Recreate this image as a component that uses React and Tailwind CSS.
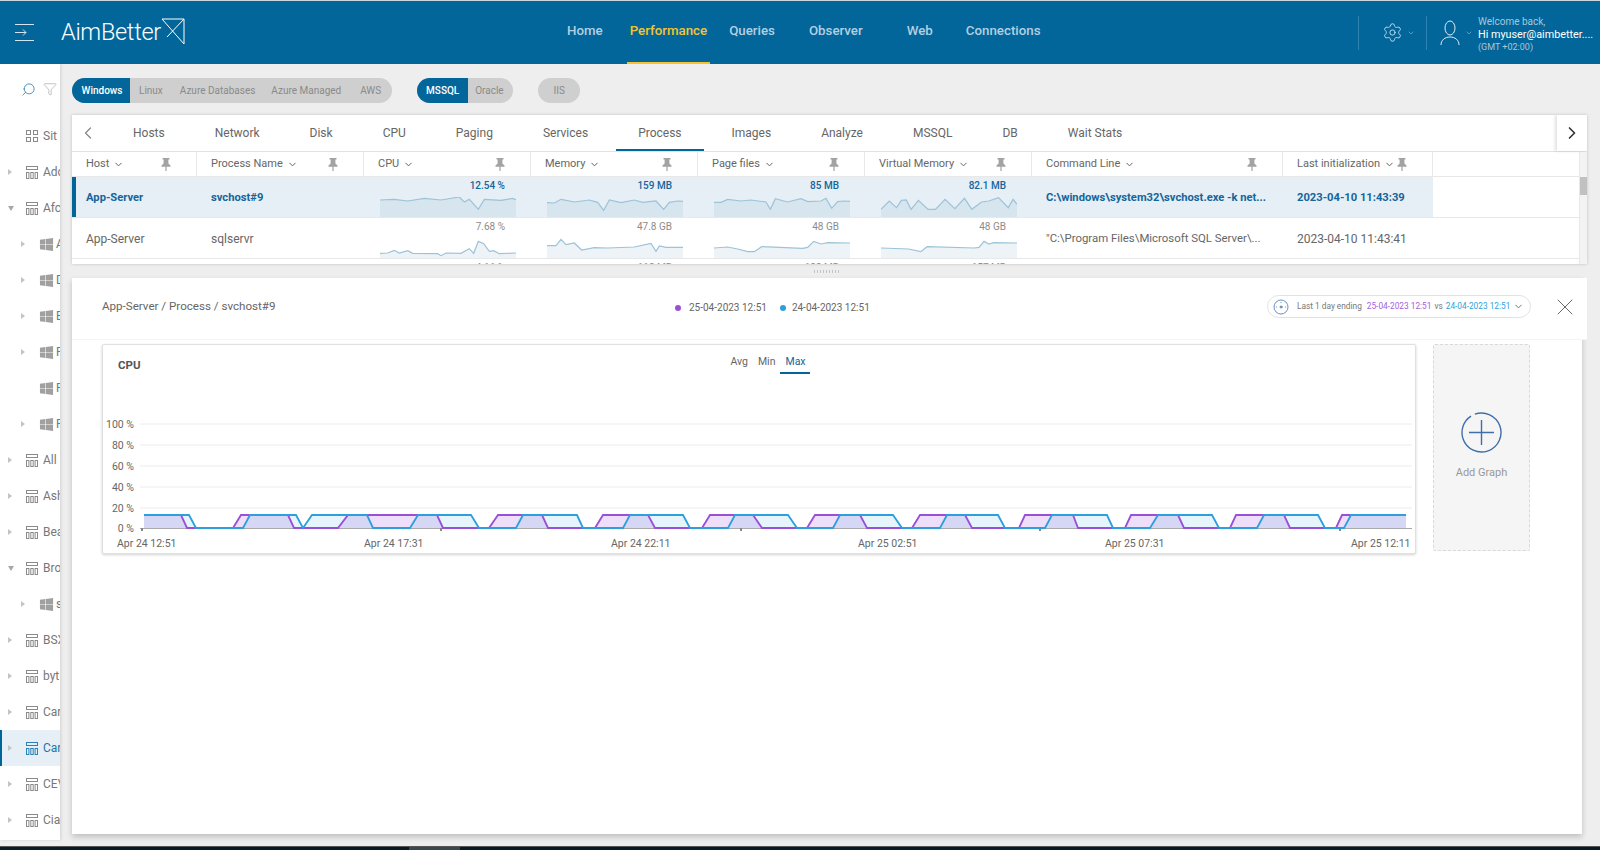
import React from 'react';
import { ChevronDown, ChevronLeft, ChevronRight, Search, Filter, Settings, X } from 'lucide-react';
import { FaWindows } from 'react-icons/fa';

const navItems = [
  { label: 'Home', cls: 'ml-0' },
  { label: 'Performance', cls: 'ml-[27px]', active: true },
  { label: 'Queries', cls: 'ml-[22px]' },
  { label: 'Observer', cls: 'ml-[34px]' },
  { label: 'Web', cls: 'ml-[44px]' },
  { label: 'Connections', cls: 'ml-[33px]' },
];

const tabs = ['Hosts', 'Network', 'Disk', 'CPU', 'Paging', 'Services', 'Process', 'Images', 'Analyze', 'MSSQL', 'DB', 'Wait Stats'];

const tree = [
  { name: 'Sit', kind: 'grid' },
  { name: 'Adc', kind: 'srv', caret: 'r' },
  { name: 'Afc', kind: 'srv', caret: 'd' },
  { name: 'A', kind: 'win', caret: 'r' },
  { name: 'D', kind: 'win', caret: 'r' },
  { name: 'E', kind: 'win', caret: 'r' },
  { name: 'F', kind: 'win', caret: 'r' },
  { name: 'F', kind: 'win' },
  { name: 'F', kind: 'win', caret: 'r' },
  { name: 'All', kind: 'srv', caret: 'r' },
  { name: 'Ash', kind: 'srv', caret: 'r' },
  { name: 'Bea', kind: 'srv', caret: 'r' },
  { name: 'Bro', kind: 'srv', caret: 'd' },
  { name: 's', kind: 'win', caret: 'r' },
  { name: 'BSX', kind: 'srv', caret: 'r' },
  { name: 'byt', kind: 'srv', caret: 'r' },
  { name: 'Car', kind: 'srv', caret: 'r' },
  { name: 'Car', kind: 'srv', caret: 'r', selected: true },
  { name: 'CEV', kind: 'srv', caret: 'r' },
  { name: 'Cia', kind: 'srv', caret: 'r' },
];

const columns = [
  { label: 'Host', w: 'w-[125px]' },
  { label: 'Process Name', w: 'w-[167px]' },
  { label: 'CPU', w: 'w-[167px]' },
  { label: 'Memory', w: 'w-[167px]' },
  { label: 'Page files', w: 'w-[167px]' },
  { label: 'Virtual Memory', w: 'w-[167px]' },
  { label: 'Command Line', w: 'w-[251px]' },
  { label: 'Last initialization', w: 'w-[150px]' },
];

// sparkline points, measured off the 3x crops
const rows = [
  {
    host: 'App-Server',
    name: 'svchost#9',
    selected: true,
    cmd: 'C:\\windows\\system32\\svchost.exe -k net...',
    time: '2023-04-10 11:43:39',
    metrics: [
      { value: '12.54 %', pts: [[0,9],[43,7],[83,12],[133,4],[183,9],[238,0],[253,15],[268,7],[295,37],[313,7],[363,10],[398,4],[408,8]] },
      { value: '159 MB', pts: [[0,17],[22,18],[42,7],[82,15],[127,9],[152,16],[170,40],[187,9],[222,17],[262,9],[287,16],[327,12],[350,37],[367,16],[392,12],[408,13]] },
      { value: '85 MB', pts: [[0,16],[21,16],[41,7],[81,12],[111,9],[156,15],[169,37],[184,5],[221,15],[261,5],[281,14],[321,12],[336,4],[353,34],[371,14],[390,12],[408,13]] },
      { value: '82.1 MB', w: 280, pts: [[0,37],[17,12],[32,32],[42,10],[52,9],[62,37],[77,10],[97,37],[112,37],[132,7],[152,35],[172,4],[187,37],[207,15],[222,12],[242,2],[262,32],[272,7],[280,22]] },
    ],
  },
  {
    host: 'App-Server',
    name: 'sqlservr',
    cmd: '"C:\\Program Files\\Microsoft SQL Server\\...',
    time: '2023-04-10 11:43:41',
    metrics: [
      { value: '7.68 %', pts: [[0,46],[23,45],[43,37],[58,45],[83,38],[98,46],[173,47],[183,53],[198,45],[243,46],[268,32],[281,46],[295,10],[311,17],[328,40],[341,38],[358,47],[408,45]] },
      { value: '47.8 GB', pts: [[0,23],[27,23],[42,4],[57,20],[82,15],[104,36],[142,29],[182,30],[262,27],[312,16],[327,40],[337,24],[357,28],[408,28]] },
      { value: '48 GB', pts: [[0,30],[41,27],[71,33],[101,41],[121,41],[143,26],[266,31],[281,28],[299,10],[321,18],[341,14],[408,15]] },
      { value: '48 GB', w: 280, pts: [[0,30],[57,33],[82,41],[95,26],[192,30],[202,28],[212,10],[222,18],[232,14],[280,15]] },
    ],
  },
  {
    host: 'App-Server',
    name: 'w3wp',
    cmd: '',
    time: '',
    metrics: [
      { value: '4.16 %', pts: [[0,30],[408,30]] },
      { value: '112 MB', pts: [[0,30],[408,30]] },
      { value: '123 MB', pts: [[0,30],[408,30]] },
      { value: '157 MB', w: 280, pts: [[0,30],[280,30]] },
    ],
  },
];

// chart pulses in page x: rise start, rise end, fall start, fall end
const bluePulses = [[144,144,189,196],[243,250,296,303],[303,312,367,373],[410,418,471,479],[516,523,577,583],[623,630,683,690],[728,735,788,797],[833,840,893,902],[940,947,998,1005],[1045,1052,1107,1113],[1150,1158,1212,1219],[1257,1264,1318,1325],[1344,1351,1406,1406]];
const purplePulses = [[144,144,181,187],[233,241,288,294],[338,348,437,443],[489,498,542,548],[595,603,648,655],[702,710,753,762],[807,815,860,867],[912,920,965,972],[1019,1025,1073,1078],[1125,1131,1178,1184],[1230,1236,1284,1290],[1336,1342,1406,1406]];

const CHART_X = 103; // chart svg starts here on the page
const CHART_Y = 414;
const TOP = 515 - CHART_Y;
const BASE = 528 - CHART_Y;

function pulsePoints(pulses) {
  const out = [];
  pulses.forEach(([a, b, c, d]) => {
    out.push([a - CHART_X, a === b ? TOP : BASE], [b - CHART_X, TOP], [c - CHART_X, TOP], [d - CHART_X, c === d ? TOP : BASE]);
  });
  return out;
}

const bluePts = pulsePoints(bluePulses);
const purplePts = pulsePoints(purplePulses);
const toStr = (pts) => pts.map((p) => p.join(',')).join(' ');
const toArea = (pts) => `${pts[0][0]},${BASE} ${toStr(pts)} ${pts[pts.length - 1][0]},${BASE}`;

function Pin() {
  return (
    <svg width="10" height="13" viewBox="0 0 10 13" className="shrink-0 fill-[#a3a3a3]">
      <path d="M1.5 0h7v1.4H7.4v4l2.1 2.2v1.2H5.6V13H4.4V8.8H.5V7.6l2.1-2.2v-4H1.5z" />
    </svg>
  );
}

function Caret({ dir }) {
  if (dir === 'd') {
    return (
      <svg width="6" height="5" viewBox="0 0 6 5" className="fill-[#a8a8a8]">
        <path d="M0 0h6L3 5z" />
      </svg>
    );
  }
  return (
    <svg width="4" height="6" viewBox="0 0 4 6" className="fill-[#c4c4c4]">
      <path d="M0 0l4 3-4 3z" />
    </svg>
  );
}

function ServerIcon({ active }) {
  const c = active ? 'stroke-[#2a83b8]' : 'stroke-[#8a8a8a]';
  return (
    <svg width="12" height="13" viewBox="0 0 12 13" fill="none" className={c} strokeWidth="1">
      <rect x="0.5" y="0.5" width="11" height="3" />
      <rect x="0.5" y="6.5" width="2.4" height="6" />
      <rect x="4.8" y="6.5" width="2.4" height="6" />
      <rect x="9.1" y="6.5" width="2.4" height="6" />
    </svg>
  );
}

function GridIcon() {
  return (
    <svg width="12" height="12" viewBox="0 0 12 12" fill="none" className="stroke-[#8a8a8a]">
      <rect x="0.5" y="0.5" width="4" height="4" />
      <rect x="7.5" y="0.5" width="4" height="4" />
      <rect x="0.5" y="7.5" width="4" height="4" />
      <rect x="7.5" y="7.5" width="4" height="4" />
    </svg>
  );
}

function TreeRow({ item }) {
  const child = item.kind === 'win';
  return (
    <div className={`relative flex h-9 shrink-0 items-center overflow-hidden ${child ? 'pl-[21px]' : 'pl-[8px]'} ${item.selected ? 'bg-[#e6eff5]' : ''}`}>
      {item.selected && <div className="absolute left-0 top-0 h-full w-[2px] bg-[#006699]" />}
      <div className="flex w-[18px] shrink-0 items-center">{item.caret && <Caret dir={item.caret} />}</div>
      <div className="flex w-[17px] shrink-0 items-center">
        {item.kind === 'srv' && <ServerIcon active={item.selected} />}
        {item.kind === 'grid' && <GridIcon />}
        {child && <FaWindows size={15} className="text-[#a0a0a0]" />}
      </div>
      <span className={`text-[12px] ${item.selected ? 'text-[#1c76ab]' : 'text-[#777]'}`}>{item.name}</span>
    </div>
  );
}

function Spark({ pts, w = 408, selected }) {
  const line = toStr(pts);
  const area = `0,60 ${line} ${w},60`;
  return (
    <svg viewBox={`0 0 ${w} 60`} preserveAspectRatio="none" className="block h-[20px] w-[136px]">
      <polygon points={area} className={selected ? 'fill-[#d7e5ef]' : 'fill-[#eef3f8]'} />
      <polyline points={line} fill="none" className="stroke-[#9cc3d8]" strokeWidth="1.2" vectorEffect="non-scaling-stroke" />
    </svg>
  );
}

function TableRow({ row }) {
  const on = row.selected;
  const text = on ? 'text-[11.2px] font-bold text-[#15659b]' : 'text-[12px] text-[#666]';
  return (
    <div className="flex h-[41px] shrink-0 border-b border-[#e8e8e8]">
      <div className={`flex h-full w-[1361px] shrink-0 ${on ? 'bg-[#e6eff5]' : ''}`}>
        <div className={`flex w-[125px] items-center truncate pt-[2px] pl-[14px] ${text} ${on ? 'border-l-[4px] border-[#006699] !pl-[10px]' : ''}`}>{row.host}</div>
        <div className={`flex w-[167px] items-center pt-[2px] pl-[14px] ${text}`}>{row.name}</div>
        {row.metrics.map((m, i) => (
          <div key={i} className="flex w-[167px] flex-col items-end pr-[15px]">
            <span className={`h-[20px] pr-[11px] text-[10px] leading-[17px] ${on ? 'font-medium text-[#15659b]' : 'text-[#8c8c8c]'}`}>{m.value}</span>
            <Spark pts={m.pts} w={m.w} selected={on} />
          </div>
        ))}
        <div className={`flex w-[251px] min-w-0 items-center whitespace-nowrap pt-[2px] pl-[14px] ${text} ${on ? '' : '!text-[11.4px]'}`}>
          {row.cmd}
        </div>
        <div className={`flex w-[150px] items-center pt-[2px] pl-[14px] ${text}`}>{row.time}</div>
      </div>
    </div>
  );
}

function CpuChart() {
  const ys = [
    ['100 %', 10],
    ['80 %', 31],
    ['60 %', 52],
    ['40 %', 73],
    ['20 %', 94],
    ['0 %', 114],
  ];
  const xs = [
    ['Apr 24 12:51', 14],
    ['Apr 24 17:31', 261],
    ['Apr 24 22:11', 508],
    ['Apr 25 02:51', 755],
    ['Apr 25 07:31', 1002],
    ['Apr 25 12:11', 1248],
  ];
  return (
    <svg width="1310" height="138" viewBox="0 0 1310 138" className="block">
      {ys.map(([label, y]) => (
        <g key={label}>
          {y !== 114 && <line x1="37" x2="1309" y1={y} y2={y} className="stroke-[#ececec]" />}
          <text x="31" y={y + 4} textAnchor="end" className="fill-[#666] text-[10.5px]">{label}</text>
        </g>
      ))}
      <polygon points={toArea(purplePts)} className="fill-[#a45ee0]/20" />
      <polygon points={toArea(bluePts)} className="fill-[#35a4e0]/12" />
      <line x1="37" x2="1309" y1={BASE + 0.5} y2={BASE + 0.5} className="stroke-[#aaa]" />
      {[38, 337, 637, 936, 1236].map((x) => (
        <rect key={x} x={x} y={BASE} width="2" height="3" className="fill-[#888]" />
      ))}
      <polyline points={toStr(purplePts)} fill="none" className="stroke-[#9a4fd8]" strokeWidth="1.8" />
      <polyline points={toStr(bluePts)} fill="none" className="stroke-[#2f9fdc]" strokeWidth="1.8" />
      {xs.map(([label, x]) => (
        <text key={label} x={x} y="133" className="fill-[#666] text-[10.5px]">{label}</text>
      ))}
    </svg>
  );
}

export default function App() {
  return (
    <div className="flex h-[850px] w-[1600px] flex-col overflow-hidden bg-[#eeeeee] font-['Roboto',sans-serif] text-[#666]">
      {/* top nav */}
      <header className="relative flex h-[64px] shrink-0 items-center border-t border-[#c9d6de] bg-[#02669b]">
        <svg width="20" height="17" viewBox="0 0 20 17" fill="none" className="ml-[15px] stroke-[#d4e4ee]" strokeWidth="1">
          <path d="M0 .5h19M0 16.5h19M0 8.5h11M8 5.5l3 3-3 3" />
        </svg>
        <span className="ml-[26px] text-[23.5px] font-light tracking-[-0.3px] text-white">AimBetter</span>
        <svg width="25" height="27" viewBox="0 0 25 27" fill="none" className="mb-[3px] stroke-white" strokeWidth="1">
          <path d="M1 1h22M1 1l22 25V1L6 19" />
        </svg>
        <nav className="absolute left-[567px] top-0 flex h-[63px] items-center text-[13.3px] font-medium text-[#b4cfe0]">
          {navItems.map((n) => (
            <div key={n.label} className={`relative flex h-full items-center pb-[4px] ${n.cls} ${n.active ? 'text-[#f4c430]' : ''}`}>
              {n.label}
              {n.active && <div className="absolute -left-[3px] -right-[3px] bottom-0 h-[2px] bg-[#f4c430]" />}
            </div>
          ))}
        </nav>
        <div className="ml-auto flex items-center">
          <div className="h-[34px] w-px bg-[#2e83b0]" />
          <Settings size={21} strokeWidth={1} className="ml-[23px] text-[#d4e4ee]" />
          <ChevronDown size={8} className="ml-[4px] text-[#8db7cf]" />
          <div className="ml-[11px] h-[34px] w-px bg-[#2e83b0]" />
          <svg width="20" height="26" viewBox="0 0 20 26" fill="none" className="ml-[13px] stroke-[#e2edf4]" strokeWidth="1">
            <ellipse cx="10" cy="8" rx="5" ry="7" />
            <path d="M1 25c0-5 4-8 9-8s9 3 9 8" />
          </svg>
          <ChevronDown size={8} className="ml-[5px] text-[#8db7cf]" />
          <div className="ml-[5px] mt-[3px] flex w-[122px] flex-col">
            <span className="text-[10px] leading-[13px] text-[#a6c6d9]">Welcome back,</span>
            <span className="whitespace-nowrap text-[10.8px] leading-[13px] text-white">Hi myuser@aimbetter....</span>
            <span className="text-[9px] leading-[13px] text-[#a6c6d9]">(GMT +02:00)</span>
          </div>
        </div>
      </header>

      <div className="flex min-h-0 flex-1">
        {/* tree sidebar */}
        <aside className="flex h-[776px] w-[60px] shrink-0 flex-col overflow-hidden bg-white shadow-[1px_0_3px_rgba(0,0,0,0.12)]">
          <div className="flex h-[54px] shrink-0 items-center gap-[7px] pl-[21px] pb-[4px]">
            <Search size={15} strokeWidth={1.3} className="-scale-x-100 text-[#2a7cae]" />
            <Filter size={14} strokeWidth={1} className="text-[#999]" />
          </div>
          {tree.map((t, i) => (
            <TreeRow key={i} item={t} />
          ))}
        </aside>

        <main className="flex min-w-0 flex-1 flex-col pl-[12px] pr-[13px]">
          {/* filter pills */}
          <div className="flex h-[51px] shrink-0 items-center pt-[1px] text-[10px]">
            <div className="flex h-[25px] items-center overflow-hidden rounded-full bg-[#cfcfcf] pr-[11px] text-[#8a8a8a]">
              <span className="flex h-full w-[58px] items-center justify-center bg-[#02669b] pl-[2px] font-medium text-white">Windows</span>
              <span className="ml-[9px]">Linux</span>
              <span className="ml-[17px]">Azure Databases</span>
              <span className="ml-[16px]">Azure Managed</span>
              <span className="ml-[19px]">AWS</span>
            </div>
            <div className="ml-[25px] flex h-[25px] items-center overflow-hidden rounded-full bg-[#cfcfcf] text-[#8a8a8a]">
              <span className="flex h-full w-[51px] items-center justify-center bg-[#02669b] font-medium text-white">MSSQL</span>
              <span className="w-[45px] pl-[7px]">Oracle</span>
            </div>
            <div className="ml-[25px] flex h-[25px] w-[42px] items-center justify-center rounded-full bg-[#cfcfcf] text-[#8a8a8a]">IIS</div>
          </div>

          {/* process table */}
          <section className="flex h-[149px] shrink-0 flex-col overflow-hidden bg-white shadow-[0_0_3px_rgba(0,0,0,0.2)]">
            <div className="flex h-[37px] shrink-0 items-stretch border-b border-[#e2e2e2] text-[12px] text-[#666]">
              <div className="flex w-[39px] shrink-0 items-center pl-[6px]">
                <ChevronLeft size={20} strokeWidth={1.5} className="text-[#888]" />
              </div>
              <div className="flex flex-1 gap-[6px]">
                {tabs.map((t) => (
                  <div key={t} className={`flex items-center px-[22px] ${t === 'Process' ? 'border-b-2 border-[#02669b] pt-[2px]' : ''}`}>{t}</div>
                ))}
              </div>
              <div className="flex w-[30px] shrink-0 items-center justify-center shadow-[-2px_0_3px_rgba(0,0,0,0.12)]">
                <ChevronRight size={20} strokeWidth={2} className="text-[#333]" />
              </div>
            </div>
            <div className="flex min-h-0 flex-1">
              <div className="min-w-0 flex-1 overflow-hidden">
                <div className="flex h-[25px] border-b border-[#e8e8e8] text-[11px] text-[#666]">
                  {columns.map((c) => (
                    <div key={c.label} className={`flex ${c.w} shrink-0 items-center justify-between border-r border-[#e8e8e8] pl-[14px] pr-[25px]`}>
                      <span className="flex items-center gap-[4px]">
                        {c.label}
                        <ChevronDown size={11} strokeWidth={2} className="text-[#555]" />
                      </span>
                      <Pin />
                    </div>
                  ))}
                </div>
                {rows.map((r, i) => (
                  <TableRow key={i} row={r} />
                ))}
              </div>
              <div className="w-[8px] shrink-0 border-l border-[#e8e8e8] bg-[#f3f3f3] pt-[25px]">
                <div className="h-[18px] bg-[#c1c1c1]" />
              </div>
            </div>
          </section>

          {/* splitter */}
          <div className="flex h-[14px] shrink-0 items-center justify-center pr-[6px]">
            <div className="h-[3px] w-[26px] bg-[repeating-linear-gradient(90deg,#c4c4c4_0_1px,transparent_1px_3px)]" />
          </div>

          {/* detail panel */}
          <section className="mr-[5px] flex h-[556px] shrink-0 flex-col bg-white shadow-[0_3px_6px_rgba(0,0,0,0.2)]">
            <div className="relative -mr-[5px] flex h-[62px] shrink-0 items-center border-b border-[#f4f4f4] bg-white pb-[4px]">
              <span className="ml-[30px] text-[11.6px] text-[#666]">App-Server / Process / svchost#9</span>
              <div className="absolute left-[603px] top-[22px] flex items-center text-[10px] text-[#666]">
                <span className="h-[6px] w-[6px] rounded-full bg-[#9a4fd8]" />
                <span className="ml-[8px]">25-04-2023 12:51</span>
                <span className="ml-[13px] h-[6px] w-[6px] rounded-full bg-[#2f9fdc]" />
                <span className="ml-[6px]">24-04-2023 12:51</span>
              </div>
              <div className="ml-auto flex h-[23px] w-[264px] items-center rounded-full border border-[#dfe3e8] pl-[5px] text-[8.3px] text-[#777]">
                <svg width="16" height="16" viewBox="0 0 16 16" fill="none" className="stroke-[#6c8fc4]">
                  <circle cx="8" cy="8" r="7" />
                  <path d="M3 8h1M12 8h1M8 3v1M8 8h2" />
                  <circle cx="8" cy="8" r="1" className="fill-[#6c8fc4]" />
                </svg>
                <span className="ml-[8px]">Last 1 day ending</span>
                <span className="ml-[5px] text-[#a45ee0]">25-04-2023 12:51</span>
                <span className="ml-[3px]">vs</span>
                <span className="ml-[3px] text-[#2f9fdc]">24-04-2023 12:51</span>
                <ChevronDown size={11} strokeWidth={2} className="ml-[3px] text-[#666]" />
              </div>
              <X size={28} strokeWidth={0.85} className="ml-[20px] mr-[8px] text-[#666]" />
            </div>

            <div className="flex items-start pl-[30px] pt-[4px]">
              <div className="h-[210px] w-[1314px] shrink-0 rounded-[2px] border border-[#e0e0e0] bg-white shadow-[0_1px_3px_rgba(0,0,0,0.18)]">
                <div className="relative h-[69px]">
                  <span className="absolute left-[15px] top-[12px] text-[11.5px] font-bold text-[#555]">CPU</span>
                  <div className="flex justify-center gap-[10px] pl-[18px] pt-[9px] text-[10.5px] text-[#666]">
                    <span>Avg</span>
                    <span>Min</span>
                    <span className="relative text-[#15659b]">
                      Max
                      <span className="absolute -left-[5px] -right-[4px] top-[18px] h-[2px] bg-[#02669b]" />
                    </span>
                  </div>
                </div>
                <CpuChart />
              </div>
              <div className="ml-[17px] flex h-[207px] w-[97px] shrink-0 flex-col items-center rounded-[2px] border border-dashed border-[#d9d9d9] bg-[#f5f5f5] pt-[67px]">
                <svg width="41" height="41" viewBox="0 0 41 41" fill="none" className="stroke-[#3f6fa8]" strokeWidth="1.4">
                  <circle cx="20.5" cy="20.5" r="19.5" strokeDasharray="117.4 5.1" transform="rotate(250 20.5 20.5)" />
                  <path d="M8 20.5h25M20.5 8v25" />
                </svg>
                <span className="mt-[12px] text-[11px] text-[#999]">Add Graph</span>
              </div>
            </div>
          </section>
        </main>
      </div>

      {/* OS taskbar sliver at the very bottom */}
      <div className="flex h-[4px] shrink-0 border-t border-[#555] bg-[#0a1a20]">
        <div className="ml-[409px] w-[51px] bg-[#3a474c]" />
      </div>
    </div>
  );
}
